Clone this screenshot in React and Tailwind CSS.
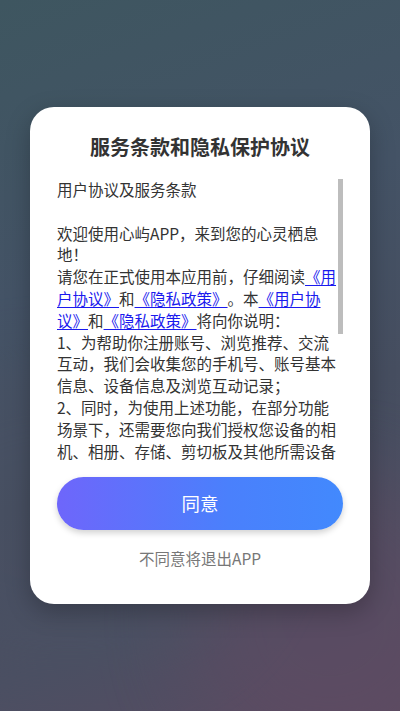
import React from "react";

const L = ({ children }) => (
  <span className="text-[#1a1aee] underline underline-offset-[2px] decoration-1">{children}</span>
);

export default function App() {
  return (
    <div className="relative w-full h-[711px] overflow-hidden bg-[linear-gradient(160deg,#3e5660_0%,#445366_35%,#464e60_60%,#4b4f62_80%,#5a4c62_100%)] flex flex-col items-center pt-[107px] [font-family:'Noto_Sans_CJK_SC','Noto_Sans',sans-serif] [text-spacing-trim:space-all]">
      <div className="absolute right-[-80px] bottom-[-60px] w-[300px] h-[300px] rounded-full bg-[#614a62] opacity-50 blur-2xl" />
      <div className="absolute left-[-120px] bottom-[40px] w-[380px] h-[300px] rounded-full bg-[#4a5264] opacity-40 blur-2xl" />
      <div className="relative w-[340px] h-[497px] bg-white rounded-[24px] flex flex-col items-center shadow-[0_8px_24px_rgba(0,0,0,0.25)]">
        <div className="mt-[26px] text-[20px] leading-[28px] font-bold text-[#333333]">服务条款和隐私保护协议</div>
        <div className="relative mt-[18px] w-[286px] h-[284px] overflow-hidden">
          <div className="w-[284px] text-[15.5px] leading-[21.8px] text-[#333333] whitespace-pre-wrap [text-spacing-trim:space-all]">
            {"用户协议及服务条款\n\n欢迎使用心屿APP，来到您的心灵栖息地！\n请您在正式使用本应用前，仔细阅读"}
            <L>《用户协议》</L>
            {"和"}
            <L>《隐私政策》</L>
            {"。本"}
            <L>《用户协议》</L>
            {"和"}
            <L>《隐私政策》</L>
            {"将向你说明：\n1、为帮助你注册账号、浏览推荐、交流互动，我们会收集您的手机号、账号基本信息、设备信息及浏览互动记录；\n2、同时，为使用上述功能，在部分功能场景下，还需要您向我们授权您设备的相机、相册、存储、剪切板及其他所需设备权限，您有权拒绝或取消授权；\n3、我们会采取业界先进的安全措施保护您的信息安全；"}
          </div>
          <div className="absolute right-0 top-0 w-[5px] h-[155px] bg-[#bdbdbd]" />
        </div>
        <button className="mt-[14px] w-[286px] h-[53px] rounded-full bg-[linear-gradient(90deg,#6e66fb_0%,#4a80fc_60%,#4289fd_100%)] text-white text-[18.5px] shadow-[0_3px_6px_rgba(0,0,0,0.18)] flex items-center justify-center">
          同意
        </button>
        <div className="mt-[17px] text-[15.5px] leading-[22px] text-[#777777]">不同意将退出APP</div>
      </div>
    </div>
  );
}
